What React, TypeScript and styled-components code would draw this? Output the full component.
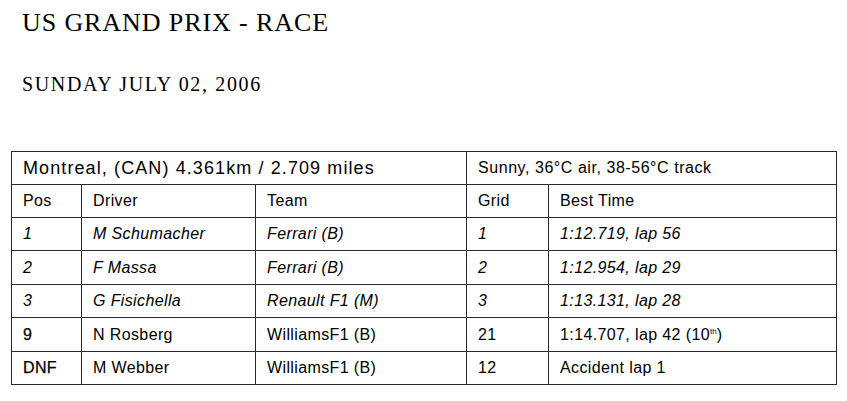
import React from "react";
import styled, { createGlobalStyle } from "styled-components";

const GlobalStyle = createGlobalStyle`
  html, body {
    margin: 0;
    padding: 0;
    background: #ffffff;
  }
`;

const Page = styled.div`
  width: 847px;
  height: 401px;
  box-sizing: border-box;
  padding: 10px 11px 0 11px;
  background: #fff;
  color: #000;
`;

const Title = styled.h1`
  margin: 0 0 0 11px;
  font-family: "Liberation Serif", "Times New Roman", serif;
  font-weight: normal;
  font-size: 26px;
  line-height: 26px;
  letter-spacing: 0.9px;
`;

const Subtitle = styled.h2`
  margin: 38px 0 0 11px;
  font-family: "Liberation Serif", "Times New Roman", serif;
  font-weight: normal;
  font-size: 20px;
  line-height: 20px;
  letter-spacing: 1.65px;
`;

const Table = styled.table`
  margin-top: 57px;
  width: 825px;
  border-collapse: collapse;
  table-layout: fixed;
  font-family: "Liberation Sans", Arial, sans-serif;
  color: #000;
`;

const Row = styled.tr<{ $h: number }>`
  height: ${(p) => p.$h}px;
`;

const Cell = styled.td<{ $italic?: boolean; $strong?: boolean; $big?: boolean; $spacing?: number }>`
  border: 1px solid #2a2a2a;
  padding: 0 0 0 11px;
  vertical-align: middle;
  font-size: ${(p) => (p.$big ? 18 : 16)}px;
  letter-spacing: ${(p) => p.$spacing ?? (p.$big ? 1.1 : 0.38)}px;
  font-style: ${(p) => (p.$italic ? "italic" : "normal")};
  -webkit-text-stroke: ${(p) => (p.$strong ? "0.25px #000" : "0")};
  white-space: nowrap;
  overflow: hidden;
`;

const Sup = styled.sup`
  font-size: 8px;
  line-height: 0;
  letter-spacing: 0;
  vertical-align: 6px;
`;

type Result = {
  pos: string;
  driver: string;
  team: string;
  grid: string;
  best: React.ReactNode;
  italic?: boolean;
  strongPos?: boolean;
  h: number;
};

const results: Result[] = [
  { pos: "1", driver: "M Schumacher", team: "Ferrari (B)", grid: "1", best: "1:12.719, lap 56", italic: true, h: 33 },
  { pos: "2", driver: "F Massa", team: "Ferrari (B)", grid: "2", best: "1:12.954, lap 29", italic: true, h: 34 },
  { pos: "3", driver: "G Fisichella", team: "Renault F1 (M)", grid: "3", best: "1:13.131, lap 28", italic: true, h: 33 },
  {
    pos: "9",
    driver: "N Rosberg",
    team: "WilliamsF1 (B)",
    grid: "21",
    best: (
      <>
        1:14.707, lap 42 (10<Sup>th</Sup>)
      </>
    ),
    strongPos: true,
    h: 34,
  },
  { pos: "DNF", driver: "M Webber", team: "WilliamsF1 (B)", grid: "12", best: "Accident lap 1", strongPos: true, h: 33 },
];

export default function App() {
  return (
    <Page>
      <GlobalStyle />
      <Title>US GRAND PRIX - RACE</Title>
      <Subtitle>SUNDAY JULY 02, 2006</Subtitle>
      <Table>
        <colgroup>
          <col style={{ width: 70 }} />
          <col style={{ width: 174 }} />
          <col style={{ width: 211 }} />
          <col style={{ width: 82 }} />
          <col style={{ width: 288 }} />
        </colgroup>
        <tbody>
          <Row $h={33}>
            <Cell colSpan={3} $big>
              Montreal, (CAN) 4.361km / 2.709 miles
            </Cell>
            <Cell colSpan={2} $spacing={0.55}>
              Sunny, 36°C air, 38-56°C track
            </Cell>
          </Row>
          <Row $h={33}>
            <Cell>Pos</Cell>
            <Cell>Driver</Cell>
            <Cell>Team</Cell>
            <Cell>Grid</Cell>
            <Cell>Best Time</Cell>
          </Row>
          {results.map((r) => (
            <Row key={r.pos} $h={r.h}>
              <Cell $italic={r.italic} $strong={r.strongPos}>
                {r.pos}
              </Cell>
              <Cell $italic={r.italic}>{r.driver}</Cell>
              <Cell $italic={r.italic}>{r.team}</Cell>
              <Cell $italic={r.italic}>{r.grid}</Cell>
              <Cell $italic={r.italic}>{r.best}</Cell>
            </Row>
          ))}
        </tbody>
      </Table>
    </Page>
  );
}
